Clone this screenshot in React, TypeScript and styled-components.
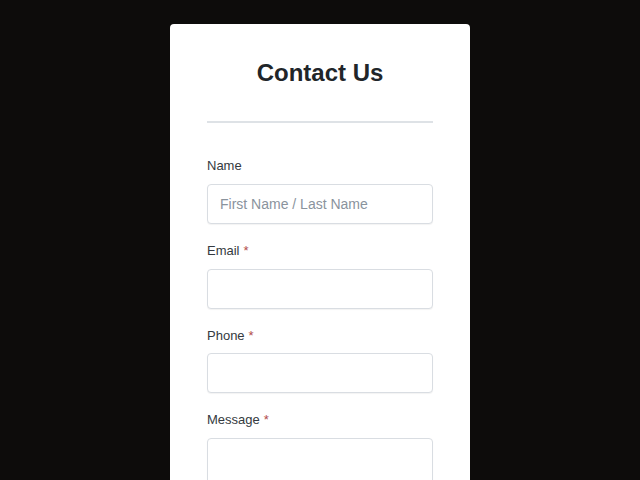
import React from "react";
import styled, { createGlobalStyle } from "styled-components";

const Global = createGlobalStyle`
  html, body {
    margin: 0;
    padding: 0;
    background: #0d0c0b;
    font-family: "Liberation Sans", Arial, sans-serif;
  }
`;

const Page = styled.div`
  display: flex;
  justify-content: center;
  padding-top: 24px;
  min-height: 456px;
`;

const Card = styled.form`
  width: 300px;
  box-sizing: border-box;
  background: #ffffff;
  border-radius: 4px;
  padding: 34.6px 37px 0;
`;

const Title = styled.h1`
  margin: 0;
  font-size: 24px;
  line-height: 28.8px;
  font-weight: 700;
  color: #212529;
  text-align: center;
`;

const Divider = styled.hr`
  margin: 33.6px 0 32.5px;
  border: 0;
  height: 2px;
  background: #dee2e6;
`;

const Group = styled.div`
  display: flex;
  flex-direction: column;
  margin-bottom: 16.17px;
`;

const Label = styled.label`
  font-size: 13px;
  line-height: 19.5px;
  padding-top: 1px;
  color: #343a40;
  margin-bottom: 8px;
`;

const Required = styled.span`
  color: #b24a4a;
  margin-left: 4px;
`;

const Input = styled.input`
  box-sizing: border-box;
  height: 40px;
  width: 100%;
  border: 1px solid #d9dde2;
  border-radius: 4px;
  padding: 0 12px;
  font-family: inherit;
  font-size: 14px;
  color: #343a40;
  box-shadow: 0 1px 1px rgba(0, 0, 0, 0.05);
  outline: none;
  &::placeholder {
    color: #8a939d;
  }
`;

const TextArea = styled.textarea`
  box-sizing: border-box;
  height: 120px;
  width: 100%;
  border: 1px solid #d9dde2;
  border-radius: 4px;
  padding: 10px 12px;
  font-family: inherit;
  font-size: 14px;
  resize: none;
  box-shadow: 0 1px 1px rgba(0, 0, 0, 0.05);
  outline: none;
`;

export default function App() {
  return (
    <>
      <Global />
      <Page>
        <Card onSubmit={(e) => e.preventDefault()}>
          <Title>Contact Us</Title>
          <Divider />
          <Group>
            <Label>Name</Label>
            <Input placeholder="First Name / Last Name" />
          </Group>
          <Group>
            <Label>
              Email<Required>*</Required>
            </Label>
            <Input type="email" />
          </Group>
          <Group>
            <Label>
              Phone<Required>*</Required>
            </Label>
            <Input type="tel" />
          </Group>
          <Group>
            <Label>
              Message<Required>*</Required>
            </Label>
            <TextArea />
          </Group>
        </Card>
      </Page>
    </>
  );
}
